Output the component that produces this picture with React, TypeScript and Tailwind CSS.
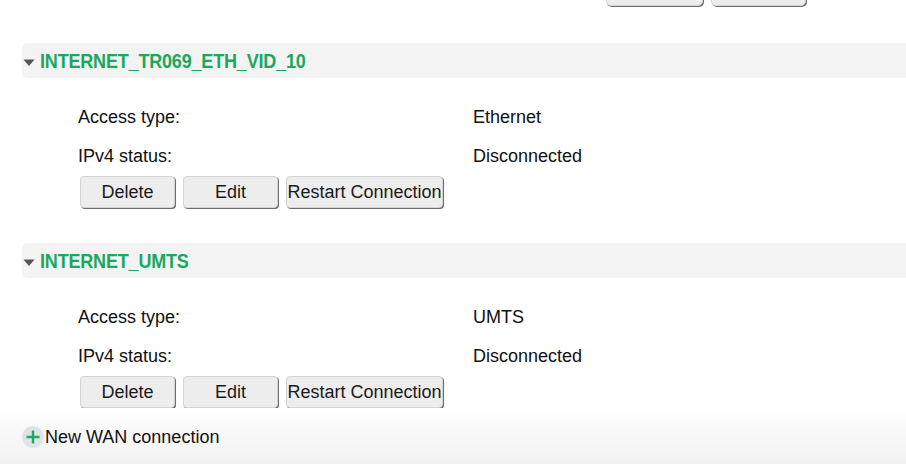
import React from "react";

interface Connection {
    name: string;
    accessType: string;
    ipv4Status: string;
}

const connections: Connection[] = [
    { name: "INTERNET_TR069_ETH_VID_10", accessType: "Ethernet", ipv4Status: "Disconnected" },
    { name: "INTERNET_UMTS", accessType: "UMTS", ipv4Status: "Disconnected" },
];

function Btn({ label, width }: { label: string; width: string }) {
    return (
        <button
            className={`${width} h-[32px] flex items-center justify-center rounded-[4px] bg-[#ededed] border border-[#d4d4d4] shadow-[1px_1px_0_0_#6e6e6e] text-[18px] text-[#1a1a1a] leading-none whitespace-nowrap`}
        >
            {label}
        </button>
    );
}

export default function App() {
    return (
        <div
            className="w-[906px] h-[464px] overflow-hidden bg-white flex flex-col text-[#111]"
            style={{ fontFamily: '"Liberation Sans", Arial, sans-serif' }}
        >
            {/* buttons from the section above, cut off */}
            <div className="flex gap-[8px] pl-[606px] -mt-[26px] shrink-0">
                <div className="w-[97px] h-[32px] rounded-[5px] bg-[#ededed] border border-[#d4d4d4] shadow-[1px_1px_0_0_#6e6e6e]" />
                <div className="w-[95px] h-[32px] rounded-[5px] bg-[#ededed] border border-[#d4d4d4] shadow-[1px_1px_0_0_#6e6e6e]" />
            </div>

            <div className="pl-[22px] pt-[37px] shrink-0">
                {connections.map((c) => (
                    <div key={c.name} className="mb-[35px] last:mb-0">
                        {/* Section header */}
                        <div className="h-[35px] w-[900px] bg-[#f3f3f3] rounded-l-[5px] flex items-center">
                            <svg width="14" height="8" viewBox="0 0 14 8" className="ml-[1px] mt-[4px] shrink-0">
                                <path d="M0.5 0.5 L11.5 0.5 L6 7 Z" fill="#555" />
                            </svg>
                            <span className="ml-[3px] inline-block origin-left scale-x-[0.9] text-[20px] font-bold text-[#1aa85c] tracking-[-0.2px] whitespace-nowrap">
                                {c.name}
                            </span>
                        </div>

                        {/* Details */}
                        <div className="pl-[56px] pt-[20px] text-[18px]">
                            <div className="h-[39px] grid grid-cols-[395px_1fr] items-center">
                                <span>Access type:</span>
                                <span>{c.accessType}</span>
                            </div>
                            <div className="h-[39px] grid grid-cols-[395px_1fr] items-center">
                                <span>IPv4 status:</span>
                                <span>{c.ipv4Status}</span>
                            </div>
                            <div className="flex gap-[8px] pl-[2px]">
                                <Btn label="Delete" width="w-[95px]" />
                                <Btn label="Edit" width="w-[95px]" />
                                <Btn label="Restart Connection" width="w-[157px]" />
                            </div>
                        </div>
                    </div>
                ))}
            </div>

            {/* New connection */}
            <div className="flex-1 bg-gradient-to-b from-white to-[#f1f1f1] pl-[22px] pt-[14px]">
                <div className="h-[30px] flex items-center">
                    <span className="w-[22px] h-[22px] rounded-full bg-[#dfe4ea] flex items-center justify-center shrink-0">
                        <svg width="16" height="16" viewBox="0 0 16 16">
                            <path d="M8 1.5 V14.5 M1.5 8 H14.5" stroke="#22a85c" strokeWidth="2.4" />
                        </svg>
                    </span>
                    <span className="ml-[1px] text-[18px] text-[#111]">New WAN connection</span>
                </div>
            </div>
        </div>
    );
}
